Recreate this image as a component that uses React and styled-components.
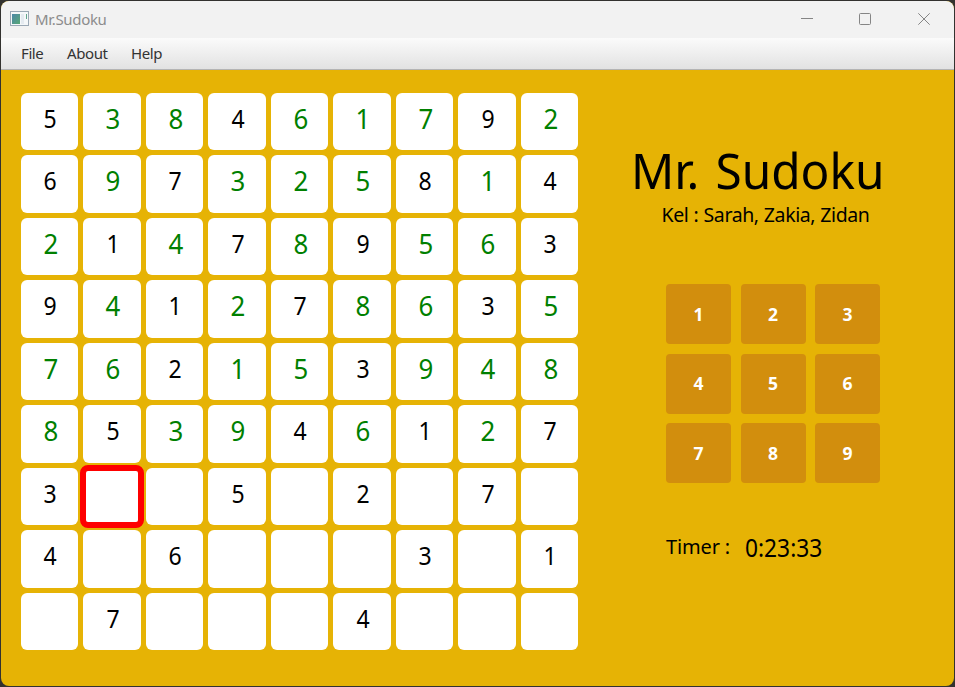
import React from "react";
import styled, { createGlobalStyle } from "styled-components";

const GlobalStyle = createGlobalStyle`
  * { box-sizing: border-box; }
  html, body { margin: 0; height: 100%; overflow: hidden; background: #33322f; }
  body { font-family: "Noto Sans", "Open Sans", sans-serif; }
`;

const Desktop = styled.div`
  width: 955px;
  height: 687px;
  padding: 1px;
  background: #33322f;
`;

const Window = styled.div`
  display: flex;
  flex-direction: column;
  width: 953px;
  height: 685px;
  border-radius: 8px;
  overflow: hidden;
  background: #e6b305;
`;

const TitleBar = styled.header`
  display: flex;
  align-items: center;
  height: 37px;
  padding: 0 1px 2px 9px;
  background: #f2f2f2;
`;

const WindowTitle = styled.span`
  flex: 1;
  margin-left: 6px;
  font-size: 15px;
  line-height: 20px;
  letter-spacing: -0.33px;
  color: #8c8c8c;
`;

const WindowButton = styled.div`
  display: flex;
  align-items: center;
  justify-content: center;
  width: 58.5px;
  height: 35px;
`;

const MenuBar = styled.nav`
  display: flex;
  height: 32px;
  padding: 0 20px;
  background: linear-gradient(#fbfbfb, #e2e2e2);
  border-bottom: 1px solid #b4b4b4;
`;

const MenuItem = styled.span`
  width: ${(p) => p.$width}px;
  font-size: 15px;
  line-height: 31px;
  letter-spacing: -0.4px;
  color: #333;
`;

const Content = styled.main`
  display: flex;
  flex: 1;
  padding: 22.75px 0 0 19.75px;
`;

const Board = styled.div`
  display: grid;
  grid-template-columns: repeat(9, 57.5px);
  grid-auto-rows: 57.5px;
  gap: 5px;
`;

const Cell = styled.div`
  position: relative;
  display: flex;
  justify-content: center;
  border-radius: 6px;
  background: #fff;
  font-size: ${(p) => (p.$solved ? 27.5 : 24.5)}px;
  line-height: ${(p) => (p.$solved ? 51 : 52)}px;
  color: ${(p) => (p.$solved ? "#008000" : "#000")};
  padding-left: ${(p) => (p.$solved ? 2.5 : 1.5)}px;
`;

const Digit = styled.span`
  transform: scaleX(0.94);
`;

const Selection = styled.div`
  position: absolute;
  inset: -3px;
  border: 6px solid #fe0000;
  border-radius: 8px;
`;

const SidePanel = styled.aside`
  display: flex;
  flex-direction: column;
  margin-left: 53.25px;
  width: 270px;
`;

const GameTitle = styled.h1`
  margin: 43.25px 0 0 -1px;
  font-size: 50px;
  font-weight: 400;
  line-height: 68px;
  word-spacing: 4px;
  white-space: nowrap;
  color: #000;
  transform: scaleX(0.955);
  transform-origin: left;
`;

const Credits = styled.p`
  margin: 0 0 0 30px;
  font-size: 19.5px;
  line-height: 22px;
  letter-spacing: -0.4px;
  word-spacing: 0.5px;
  white-space: nowrap;
  color: #000;
`;

const Keypad = styled.div`
  display: grid;
  grid-template-columns: repeat(3, 65px);
  grid-auto-rows: 60px;
  gap: 9.5px;
  margin: 58px 0 0 34.5px;
`;

const Key = styled.button`
  padding: 0 0 1px;
  border: 0;
  border-radius: 4px;
  background: #d28e0d;
  color: #fff;
  font: 700 17.5px/58px "Noto Sans", "Open Sans", sans-serif;
`;

const TimerRow = styled.div`
  display: flex;
  margin: 46px 0 0 34.5px;
  color: #000;
`;

const TimerLabel = styled.span`
  width: 79px;
  font-size: 20px;
  line-height: 36px;
  letter-spacing: -0.15px;
  white-space: nowrap;
`;

const TimerValue = styled.span`
  font-size: 25px;
  line-height: 37px;
  transform: scaleX(0.91);
  transform-origin: left;
`;

const givens = [
  "5..4...9.",
  "6.7...8.4",
  ".1.7.9..3",
  "9.1.7..3.",
  "..2..3...",
  ".5..4.1.7",
  "3..5.2.7.",
  "4.6...3.1",
  ".7...4...",
].join("");

const entries = [
  ".38.617.2",
  ".9.325.1.",
  "2.4.8.56.",
  ".4.2.86.5",
  "76.15.948",
  "8.39.6.2.",
  ".........",
  ".........",
  ".........",
].join("");

const selected = 55;

function AppIcon() {
  return (
    <svg width="19" height="16" viewBox="0 0 19 16">
      <defs>
        <linearGradient id="pane" x1="0" y1="0" x2="1" y2="1">
          <stop offset="0" stopColor="#4b87a8" />
          <stop offset="1" stopColor="#58a875" />
        </linearGradient>
      </defs>
      <rect x="0.5" y="0.5" width="18" height="14" fill="#f4f7f9" stroke="#9aa8b5" />
      <rect x="2" y="3" width="8" height="10" fill="url(#pane)" />
      <rect x="11" y="3" width="3" height="10" fill="#e4eaf0" />
      <path d="M16.5 3v5" stroke="#62a58b" />
    </svg>
  );
}

export default function App() {
  return (
    <Desktop>
      <GlobalStyle />
      <Window>
        <TitleBar>
          <AppIcon />
          <WindowTitle>Mr.Sudoku</WindowTitle>
          <WindowButton>
            <svg width="12" height="12" stroke="#858585"><path d="M0 5.5h12" /></svg>
          </WindowButton>
          <WindowButton>
            <svg width="12" height="12" fill="none" stroke="#858585"><rect x="0.5" y="0.5" width="11" height="11" rx="1" /></svg>
          </WindowButton>
          <WindowButton>
            <svg width="12" height="12" stroke="#858585"><path d="M0.3 0.3l11.4 11.4M11.7 0.3L0.3 11.7" /></svg>
          </WindowButton>
        </TitleBar>
        <MenuBar>
          <MenuItem $width={46}>File</MenuItem>
          <MenuItem $width={64}>About</MenuItem>
          <MenuItem $width={40}>Help</MenuItem>
        </MenuBar>
        <Content>
          <Board>
            {Array.from({ length: 81 }, (_, i) => {
              const solved = entries[i] !== ".";
              const value = solved ? entries[i] : givens[i];
              return (
                <Cell key={i} $solved={solved}>
                  {value !== "." && <Digit>{value}</Digit>}
                  {i === selected && <Selection />}
                </Cell>
              );
            })}
          </Board>
          <SidePanel>
            <GameTitle>Mr. Sudoku</GameTitle>
            <Credits>Kel : Sarah, Zakia, Zidan</Credits>
            <Keypad>
              {[1, 2, 3, 4, 5, 6, 7, 8, 9].map((n) => (
                <Key key={n}>{n}</Key>
              ))}
            </Keypad>
            <TimerRow>
              <TimerLabel>Timer :</TimerLabel>
              <TimerValue>0:23:33</TimerValue>
            </TimerRow>
          </SidePanel>
        </Content>
      </Window>
    </Desktop>
  );
}
